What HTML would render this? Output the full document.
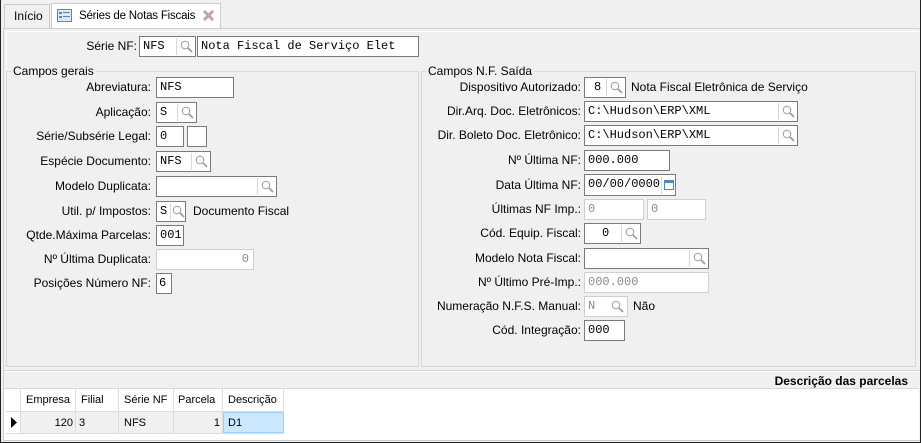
<!DOCTYPE html>
<html><head><meta charset="utf-8"><style>
*{box-sizing:border-box;margin:0;padding:0}
body{width:921px;height:443px;background:#f0f0f0;font-family:"Liberation Sans",sans-serif;font-size:12px;color:#000;position:relative;overflow:hidden}
.a{position:absolute}
.lbl{position:absolute;text-align:right;white-space:nowrap;line-height:14px}
.in{position:absolute;background:#fff;border:1px solid #7a7a7a;height:21px;font-family:"Liberation Mono",monospace;font-size:12px;line-height:19px;padding-left:3px;white-space:nowrap;overflow:hidden}
.dis{border-color:#cfcfcf;color:#8a8a8a}
.s{position:absolute;top:1px;right:1px;width:18px;height:17px;border-left:1px solid #d8d8d8}
.s svg{position:absolute;left:3px;top:2px}
.fs{position:absolute;border:1px solid #d5d5d5;border-top-color:#dcdcdc}
.lg{position:absolute;background:#f0f0f0;padding:0 2px;top:-8px;left:4px;line-height:14px}
.g{font-family:"Liberation Sans Narrow","Liberation Sans",sans-serif;font-size:11px}
</style></head><body>
<div class="a" style="left:0;top:0;width:921px;height:443px;border:1px solid #222;border-top:none"></div>
<div class="a" style="left:4px;top:4px;width:46px;height:24px;border:1px solid #ccc;border-bottom:none;background:#f0f0f0;line-height:22px;padding-left:9px">Início</div>
<div class="a" style="left:51px;top:3px;width:170px;height:26px;border:1px solid #ccc;border-bottom:none;background:#fff;line-height:24px;padding-left:27px;font-size:11.5px;letter-spacing:-0.2px">Séries de Notas Fiscais</div>
<svg class="a" style="left:57px;top:9px" width="15" height="13"><rect x="0.5" y="0.5" width="14" height="12" fill="#dbe8f5" stroke="#5c87b8"/><rect x="2" y="3" width="3" height="2" fill="#5c87b8"/><rect x="6" y="3" width="7" height="1" fill="#5c87b8"/><rect x="2" y="7" width="3" height="2" fill="#5c87b8"/><rect x="6" y="7" width="7" height="1" fill="#5c87b8"/></svg>
<svg class="a" style="left:203px;top:10px" width="11" height="11"><path d="M1 1L10 10M10 1L1 10" stroke="#a8789a" stroke-width="2.6"/><path d="M1 1L10 10M10 1L1 10" stroke="#d7b8cf" stroke-width="1"/></svg>
<div class="a" style="left:3px;top:28px;width:917px;height:413px;border:1px solid #cfcfcf;border-right:none;background:#f0f0f0"></div>
<div class="a" style="left:6px;top:31px;width:912px;height:339px;border-top:1px solid #fff;border-left:1px solid #fff"></div>

<div class="lbl" style="left:40px;width:97px;top:39px">Série NF:</div>
<div class="in" style="left:139px;top:36px;width:57px">NFS<div class="s"><svg width="13" height="13"><circle cx="5" cy="5" r="3.8" fill="none" stroke="#9a9a9a"/><path d="M8 8L12 12" stroke="#9a9a9a" stroke-width="1.6"/></svg></div></div>
<div class="in" style="left:197px;top:36px;width:222px">Nota Fiscal de Serviço Elet</div>

<div class="fs" style="left:6px;top:71px;width:413px;height:296px"><div class="lg">Campos gerais</div></div>
<div class="lbl" style="left:10px;width:141px;top:80px">Abreviatura:</div>
<div class="in" style="left:156px;top:77px;width:78px">NFS</div>
<div class="lbl" style="left:10px;width:141px;top:105px">Aplicação:</div>
<div class="in" style="left:156px;top:102px;width:41px">S<div class="s"><svg width="13" height="13"><circle cx="5" cy="5" r="3.8" fill="none" stroke="#9a9a9a"/><path d="M8 8L12 12" stroke="#9a9a9a" stroke-width="1.6"/></svg></div></div>
<div class="lbl" style="left:10px;width:141px;top:129px">Série/Subsérie Legal:</div>
<div class="in" style="left:156px;top:126px;width:28px">0</div>
<div class="in" style="left:187px;top:126px;width:20px"></div>
<div class="lbl" style="left:10px;width:141px;top:154px">Espécie Documento:</div>
<div class="in" style="left:156px;top:151px;width:55px">NFS<div class="s"><svg width="13" height="13"><circle cx="5" cy="5" r="3.8" fill="none" stroke="#9a9a9a"/><path d="M8 8L12 12" stroke="#9a9a9a" stroke-width="1.6"/></svg></div></div>
<div class="lbl" style="left:10px;width:141px;top:179px">Modelo Duplicata:</div>
<div class="in" style="left:156px;top:176px;width:121px"><div class="s"><svg width="13" height="13"><circle cx="5" cy="5" r="3.8" fill="none" stroke="#9a9a9a"/><path d="M8 8L12 12" stroke="#9a9a9a" stroke-width="1.6"/></svg></div></div>
<div class="lbl" style="left:10px;width:141px;top:204px">Util. p/ Impostos:</div>
<div class="in" style="left:156px;top:201px;width:30px">S<div class="s" style="width:14px"><svg width="13" height="13" style="left:1px"><circle cx="5" cy="5" r="3.8" fill="none" stroke="#9a9a9a"/><path d="M8 8L12 12" stroke="#9a9a9a" stroke-width="1.6"/></svg></div></div>
<div class="lbl" style="left:193px;top:204px">Documento Fiscal</div>
<div class="lbl" style="left:10px;width:141px;top:228px">Qtde.Máxima Parcelas:</div>
<div class="in" style="left:156px;top:225px;width:28px">001</div>
<div class="lbl" style="left:10px;width:141px;top:252px">Nº Última Duplicata:</div>
<div class="in dis" style="left:156px;top:249px;width:98px;text-align:right;padding-right:4px">0</div>
<div class="lbl" style="left:10px;width:141px;top:276px">Posições Número NF:</div>
<div class="in" style="left:156px;top:273px;width:16px;padding-left:2px">6</div>

<div class="fs" style="left:421px;top:71px;width:495px;height:296px"><div class="lg">Campos N.F. Saída</div></div>
<div class="lbl" style="left:420px;width:161px;top:80px">Dispositivo Autorizado:</div>
<div class="in" style="left:584px;top:77px;width:42px;padding-left:9px">8<div class="s"><svg width="13" height="13"><circle cx="5" cy="5" r="3.8" fill="none" stroke="#9a9a9a"/><path d="M8 8L12 12" stroke="#9a9a9a" stroke-width="1.6"/></svg></div></div>
<div class="lbl" style="left:631px;top:80px">Nota Fiscal Eletrônica de Serviço</div>
<div class="lbl" style="left:420px;width:161px;top:104px">Dir.Arq. Doc. Eletrônicos:</div>
<div class="in" style="left:584px;top:101px;width:214px">C:\Hudson\ERP\XML<div class="s"><svg width="13" height="13"><circle cx="5" cy="5" r="3.8" fill="none" stroke="#9a9a9a"/><path d="M8 8L12 12" stroke="#9a9a9a" stroke-width="1.6"/></svg></div></div>
<div class="lbl" style="left:420px;width:161px;top:128px">Dir. Boleto Doc. Eletrônico:</div>
<div class="in" style="left:584px;top:125px;width:214px">C:\Hudson\ERP\XML<div class="s"><svg width="13" height="13"><circle cx="5" cy="5" r="3.8" fill="none" stroke="#9a9a9a"/><path d="M8 8L12 12" stroke="#9a9a9a" stroke-width="1.6"/></svg></div></div>
<div class="lbl" style="left:420px;width:161px;top:153px">Nº Última NF:</div>
<div class="in" style="left:584px;top:150px;width:86px">000.000</div>
<div class="lbl" style="left:420px;width:161px;top:178px">Data Última NF:</div>
<div class="in" style="left:584px;top:174px;width:92px;height:22px">00/00/0000<div class="a" style="left:76px;top:1px;width:1px;height:18px;background:#ddd"></div><svg class="a" style="left:79px;top:5px" width="10" height="10"><rect x="0.5" y="0.5" width="9" height="9" fill="#fff" stroke="#4a8ac4"/><rect x="0" y="0" width="10" height="3" fill="#4a8ac4"/></svg></div>
<div class="lbl" style="left:420px;width:161px;top:202px">Últimas NF Imp.:</div>
<div class="in dis" style="left:584px;top:199px;width:60px">0</div>
<div class="in dis" style="left:647px;top:199px;width:59px">0</div>
<div class="lbl" style="left:420px;width:161px;top:226px">Cód. Equip. Fiscal:</div>
<div class="in" style="left:584px;top:223px;width:57px;padding-left:17px">0<div class="s"><svg width="13" height="13"><circle cx="5" cy="5" r="3.8" fill="none" stroke="#9a9a9a"/><path d="M8 8L12 12" stroke="#9a9a9a" stroke-width="1.6"/></svg></div></div>
<div class="lbl" style="left:420px;width:161px;top:251px">Modelo Nota Fiscal:</div>
<div class="in" style="left:584px;top:248px;width:125px"><div class="s"><svg width="13" height="13"><circle cx="5" cy="5" r="3.8" fill="none" stroke="#9a9a9a"/><path d="M8 8L12 12" stroke="#9a9a9a" stroke-width="1.6"/></svg></div></div>
<div class="lbl" style="left:420px;width:161px;top:275px">Nº Último Pré-Imp.:</div>
<div class="in dis" style="left:584px;top:272px;width:125px">000.000</div>
<div class="lbl" style="left:420px;width:161px;top:299px">Numeração N.F.S. Manual:</div>
<div class="in dis" style="left:584px;top:296px;width:44px">N<div class="s" style="border:none"><svg width="13" height="13"><circle cx="5" cy="5" r="3.8" fill="none" stroke="#9a9a9a"/><path d="M8 8L12 12" stroke="#9a9a9a" stroke-width="1.6"/></svg></div></div>
<div class="lbl" style="left:633px;top:299px">Não</div>
<div class="lbl" style="left:420px;width:161px;top:323px">Cód. Integração:</div>
<div class="in" style="left:584px;top:320px;width:41px">000</div>

<div class="a" style="left:4px;top:370px;width:916px;height:2px;border-top:1px solid #d0d0d0;border-bottom:1px solid #fff"></div>
<div class="a g" style="right:13px;top:374px;font-weight:bold;font-size:12px;line-height:14px">Descrição das parcelas</div>
<div class="a" style="left:4px;top:388px;width:915px;height:52px;background:#fff;border-top:1px solid #d8d8d8"></div>
<div class="a g" style="left:6px;top:389px;height:46px;width:279px">
 <div class="a" style="left:0;top:0;width:278px;height:45px;border-right:1px solid #ddd"></div>
 <div class="a" style="left:0;top:22px;width:278px;height:1px;background:#ddd"></div>
 <div class="a" style="left:0;top:44px;width:278px;height:1px;background:#ddd"></div>
 <div class="a" style="left:14px;top:23px;width:202px;height:21px;background:#f0f0f0"></div>
 <div class="a" style="left:14px;top:0;width:1px;height:45px;background:#ddd"></div>
 <div class="a" style="left:69px;top:0;width:1px;height:45px;background:#ddd"></div>
 <div class="a" style="left:112px;top:0;width:1px;height:45px;background:#ddd"></div>
 <div class="a" style="left:167px;top:0;width:1px;height:45px;background:#ddd"></div>
 <div class="a" style="left:216px;top:0;width:1px;height:45px;background:#ddd"></div>
 <div class="a" style="left:217px;top:23px;width:61px;height:21px;background:#cce8ff;border:1px solid #99d1ff"></div>
 <div class="a" style="left:20px;top:5px">Empresa</div>
 <div class="a" style="left:75px;top:5px">Filial</div>
 <div class="a" style="left:118px;top:5px">Série NF</div>
 <div class="a" style="left:172px;top:5px">Parcela</div>
 <div class="a" style="left:222px;top:5px">Descrição</div>
 <svg class="a" style="left:5px;top:28px" width="6" height="11"><path d="M0 0L6 5.5L0 11Z" fill="#000"/></svg>
 <div class="a" style="left:15px;width:52px;text-align:right;top:28px">120</div>
 <div class="a" style="left:73px;top:28px">3</div>
 <div class="a" style="left:118px;top:28px">NFS</div>
 <div class="a" style="left:168px;width:46px;text-align:right;top:28px">1</div>
 <div class="a" style="left:222px;top:28px">D1</div>
</div>
</body></html>
